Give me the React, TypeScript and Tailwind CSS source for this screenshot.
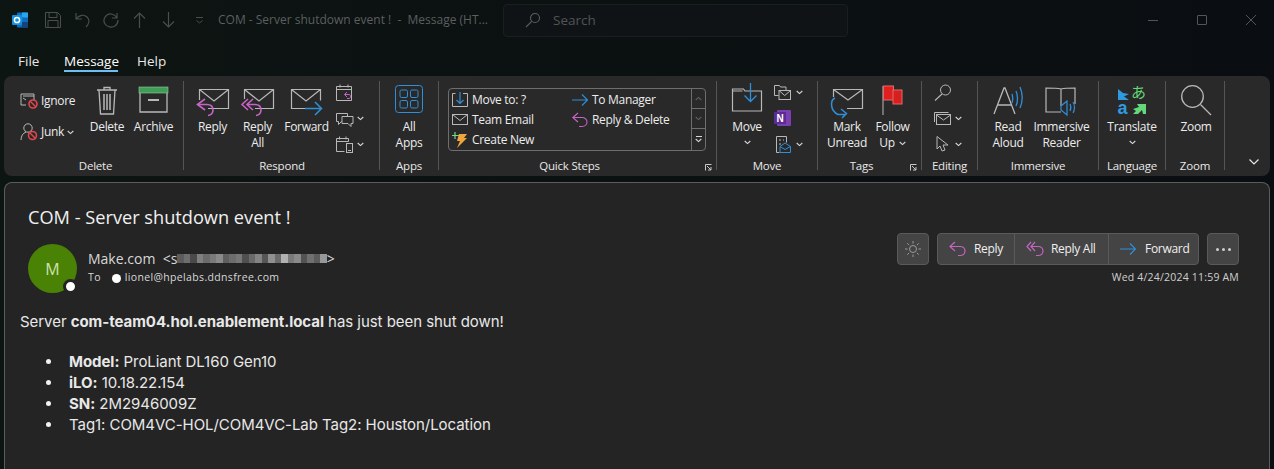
import React from "react";

const C = "#b8b8b8";
const P = "#c564c5";
const B = "#2f8fd8";

function Sv({ w, h, children, className = "" }: { w: number; h: number; children: React.ReactNode; className?: string }) {
  return (
    <svg width={w} height={h} viewBox={`0 0 ${w} ${h}`} fill="none" strokeWidth={1} className={"block shrink-0 overflow-visible " + className}>
      {children}
    </svg>
  );
}

function Caret({ className = "" }: { className?: string }) {
  return (
    <svg width="7" height="5" viewBox="0 0 7 5" fill="none" className={"shrink-0 " + className}>
      <path d="M.7 1l2.8 2.6L6.300 1" stroke="#d8d8d8" strokeWidth="1.100" />
    </svg>
  );
}

function Big({ w, icon, label, label2, caret, ml = 0 }: { w: number; icon: React.ReactNode; label: string; label2?: React.ReactNode; caret?: boolean; ml?: number }) {
  return (
    <div className="flex flex-col items-center shrink-0" style={{ width: w, marginLeft: ml }}>
      <div className="h-[35px] flex items-start justify-center">{icon}</div>
      <div className="mt-[3px] leading-[16px] whitespace-nowrap text-center">{label}</div>
      {label2 && <div className="leading-[16px] whitespace-nowrap text-center flex items-center gap-1">{label2}</div>}
      {caret && <Caret className="mt-[5px]" />}
    </div>
  );
}

function Group({ w, label, children, launcher, labelCls = "" }: { w: number; label: string; children: React.ReactNode; launcher?: boolean; labelCls?: string }) {
  return (
    <div className="relative flex flex-col shrink-0 border-r border-[#555555] my-[5px] h-[89px]" style={{ width: w }}>
      <div className="flex h-[72px]">{children}</div>
      <div className={"mt-auto -mb-[4px] text-center leading-[16px] text-[11.500px] tracking-[-.2px] text-[#e8e8e8] " + labelCls}>{label}</div>
      {launcher && (
        <svg width="7" height="7" viewBox="0 0 7 7" fill="none" className="absolute right-[4px] bottom-[-1px]">
          <path d="M.5 6.500V.5h6M2 2l4 4M6 3v3H3" stroke="#c8c8c8" />
        </svg>
      )}
    </div>
  );
}

function OutlookLogo() {
  return (
    <svg width="17" height="16" viewBox="0 0 17 16">
      <rect x="5" y="0.5" width="11" height="15" rx="1" fill="#0f6cbd" />
      <rect x="10" y="0.5" width="6" height="5" fill="#28a8ea" />
      <rect x="5" y="5" width="6" height="5" fill="#0f78d4" />
      <rect x="10" y="10" width="6" height="5.500" fill="#14447d" />
      <rect x="0" y="3" width="10" height="10" rx="1" fill="#1490df" />
      <circle cx="5" cy="8" r="2.600" fill="none" stroke="#fff" strokeWidth="1.500" />
    </svg>
  );
}

function TitleBar() {
  const s = "#4a4e4e";
  return (
    <div className="h-[40px] flex items-center relative">
      <div className="ml-[12px] w-[17px]"><OutlookLogo /></div>
      <svg width="16" height="16" viewBox="0 0 16 16" fill="none" stroke={s} className="ml-[16px]">
        <path d="M.5.5h12l3 3v12H.5zM4 .5v5h8v-5M3 15.500v-7h10v7" />
      </svg>
      <svg width="15" height="16" viewBox="0 0 15 16" fill="none" stroke={s} strokeWidth="1.200" className="ml-[14px]">
        <path d="M1 1v6h6M1 7c3-4 8-5 11-2 3 3 2 7-1 10" />
      </svg>
      <svg width="17" height="16" viewBox="0 0 17 16" fill="none" stroke={s} strokeWidth="1.200" className="ml-[13px]">
        <path d="M14 1v5H9M14 6c-2-4-7-5-10-3C1 5 0 9 2 12s7 4 10 2 3-4 3-6" />
      </svg>
      <svg width="13" height="16" viewBox="0 0 13 16" fill="none" stroke={s} strokeWidth="1.200" className="ml-[13px]">
        <path d="M6.500 16V1M1 6.500L6.500 1 12 6.500" />
      </svg>
      <svg width="13" height="16" viewBox="0 0 13 16" fill="none" stroke={s} strokeWidth="1.200" className="ml-[16px]">
        <path d="M6.500 0v15M1 9.500L6.500 15 12 9.500" />
      </svg>
      <svg width="7" height="7" viewBox="0 0 7 7" fill="none" stroke={s} className="ml-[21px]">
        <path d="M0 .5h7M.5 3.500L3.500 6l3-2.500" />
      </svg>
      <div className="ml-[15px] w-[265px] text-[12px] text-[#5b5f5f] whitespace-nowrap">COM - Server shutdown event !&nbsp; -&nbsp; Message (HT...</div>
      <div className="ml-[20px] w-[345px] h-[33px] rounded-[4px] bg-[#101315] border border-[#1b1e20] flex items-center pl-[21px]">
        <svg width="16" height="16" viewBox="0 0 16 16" fill="none" stroke="#5a5e60" strokeWidth="1.100">
          <circle cx="10" cy="6" r="4.500" />
          <path d="M6.700 9.300L1 15" />
        </svg>
        <span className="ml-[12px] text-[13.500px] text-[#505456]">Search</span>
      </div>
      <div className="ml-auto flex items-center pr-[18px] gap-[39px]">
        <div className="w-[10px] h-px bg-[#555]" />
        <div className="w-[10px] h-[10px] border border-[#555] rounded-[1px]" />
        <svg width="10" height="10" viewBox="0 0 10 10" stroke="#555"><path d="M0 0l10 10M10 0L0 10" /></svg>
      </div>
    </div>
  );
}

function Tabs() {
  return (
    <div className="h-[36px] pl-[18px] flex text-[13.500px] text-[#e8e8e8]">
      <div className="pt-[11px] w-[46px]">File</div>
      <div className="pt-[11px] w-[54px] h-[32px] border-b-[2px] border-[#70bdf2] text-white font-medium whitespace-nowrap">Message</div>
      <div className="ml-[19px] pt-[11px]">Help</div>
    </div>
  );
}

function Ribbon() {
  return (
    <div className="mx-[4px] h-[100px] rounded-[8px] bg-[#292929] flex text-[12px] tracking-[-.3px] text-[#ececec] items-start">
      <Group w={180} label="Delete" labelCls="pl-[4px]">
        <div className="w-[16px] shrink-0" />
        <div className="w-[64px] shrink-0 flex flex-col pt-[10px] gap-[11px]">
          <div className="flex items-center gap-[2px] h-[20px]">
            <svg width="19" height="16" viewBox="0 0 19 16" fill="none">
              <path d="M1 1h13v2M1 1v11h5M3 3h11v4M3 5l3 2" stroke={C} />
              <circle cx="13" cy="11" r="4" stroke="#e0474c" strokeWidth="1.600" />
              <path d="M10 8l6 6" stroke="#e0474c" strokeWidth="1.400" />
            </svg>
            <span>Ignore</span>
          </div>
          <div className="flex items-center gap-[2px] h-[20px]">
            <svg width="19" height="18" viewBox="0 0 19 18" fill="none">
              <circle cx="8" cy="5" r="4.200" stroke={C} />
              <path d="M1 17c0-4 2-7 5-8" stroke={C} />
              <circle cx="12.500" cy="12.500" r="4" stroke="#e0474c" strokeWidth="1.600" />
              <path d="M9.500 9.500l6 6" stroke="#e0474c" strokeWidth="1.400" />
            </svg>
            <span>Junk</span>
            <Caret className="ml-[1px]" />
          </div>
        </div>
        <Big w={38} ml={4} label="Delete" icon={
          <Sv w={22} h={30} className="mt-[4px]">
            <path d="M1 5h20M8 5V2.500h6V5M3 5l1.500 24h13L19 5" stroke={C} strokeWidth="1.300" />
            <path d="M8 9v16M11 9v16M14 9v16" stroke={C} strokeWidth="1.500" />
          </Sv>
        } />
        <Big w={43} ml={6} label="Archive" icon={
          <Sv w={29} h={26} className="mt-[6px]">
            <rect x="0" y="0" width="29" height="6" fill="#3e9e55" stroke="#9bc7a6" strokeWidth=".6" />
            <path d="M1 6v19h27V6" stroke={C} strokeWidth="1.300" />
            <path d="M9 13h11" stroke={C} strokeWidth="2" />
          </Sv>
        } />
      </Group>

      <Group w={196} label="Respond" labelCls="pl-[1px]">
        <Big w={39} ml={9} label="Reply" icon={
          <Sv w={33} h={30} className="mt-[8px]">
            <path d="M3.500 11V.5h29v19H12M3.500.5L18 12 32.500.5" stroke={C} strokeWidth="1.200" />
            <g stroke={P} strokeWidth="1.600">
              <path d="M9 10L1.500 15.500 9 21" />
              <path d="M1.500 15.500H11c4 0 6 2.500 6 5.500s-2 5-5 5.500" />
            </g>
          </Sv>
        } />
        <Big w={39} ml={6} label="Reply" label2="All" icon={
          <Sv w={33} h={30} className="mt-[8px]">
            <path d="M3.500 10V.5h29v19H14M3.500.5L18 12 32.500.5" stroke={C} strokeWidth="1.200" />
            <g stroke={P} strokeWidth="1.600">
              <path d="M7 10L1 15.500 7 21M12 10L6 15.500 12 21" />
              <path d="M6 15.500H14c4 0 6 2.500 6 5.500s-2 5-5 5.500" />
            </g>
          </Sv>
        } />
        <Big w={43} ml={8} label="Forward" icon={
          <Sv w={31} h={30} className="mt-[8px]">
            <path d="M14 19.500H.5V.5h29v11M.5.5L15 12 29.500.5" stroke={C} strokeWidth="1.200" />
            <path d="M14 19.500h16M24 13l6.500 6.500L24 26" stroke={B} strokeWidth="1.500" />
          </Sv>
        } />
        <div className="ml-[8px] flex flex-col pt-[3px] gap-[9px]">
          <Sv w={17} h={17}>
            <path d="M.5 2.500h15v14H.5zM.5 5.500h15M4 .5v3M12 .5v3" stroke={C} />
            <path d="M11 8L8.500 10.500 11 13M8.500 10.500H13c2 0 2 4 0 4h-2" stroke={P} />
          </Sv>
          <div className="flex items-center gap-[4px]">
            <Sv w={17} h={17}>
              <path d="M.5 3.500h11v8h-6l-3 3v-3h-2z" stroke={C} />
              <path d="M6 6.500h11v7h-2v3l-3-3H6z" fill="#292929" stroke={C} />
            </Sv>
            <Caret />
          </div>
          <div className="flex items-center gap-[4px]">
            <Sv w={17} h={17}>
              <path d="M.5 2.500h12v3M.5 2.500v13h8M.5 5.500h12M3.500 .5v3M10 .5v3" stroke={C} />
              <rect x="10.500" y="7.500" width="6" height="9" stroke={C} fill="#292929" />
              <path d="M12 14.500h3" stroke={C} />
            </Sv>
            <Caret />
          </div>
        </div>
      </Group>

      <Group w={59} label="Apps">
        <Big w={58} label="All" label2="Apps" icon={
          <Sv w={28} h={28} className="mt-[4px]">
            <rect x=".5" y=".5" width="27" height="27" rx="3" stroke={B} />
            <rect x="5" y="5" width="7.500" height="7.500" rx="1.500" stroke={B} />
            <rect x="15.500" y="5" width="7.500" height="7.500" rx="1.500" stroke={B} />
            <rect x="5" y="15.500" width="7.500" height="7.500" rx="1.500" stroke={B} />
            <rect x="15.500" y="15.500" width="7.500" height="7.500" rx="1.500" stroke={B} />
          </Sv>
        } />
      </Group>

      <Group w={278} label="Quick Steps" launcher labelCls="pr-[16px]">
        <div className="ml-[9px] mt-[7px] w-[258px] h-[63px] border border-[#6e6e6e] rounded-[4px] flex overflow-hidden">
          <div className="flex-1 flex pl-[3px] pt-[1px]">
            <div className="w-[120px] flex flex-col">
              <div className="h-[20px] flex items-center gap-[4px]">
                <Sv w={16} h={16}>
                  <path d="M.5 1.500h3M11 1.500h4.500v13H.5v-13" stroke={C} />
                  <path d="M8 0v11M4.500 8L8 11.500 11.500 8" stroke={B} strokeWidth="1.200" />
                </Sv>
                <span>Move to: ?</span>
              </div>
              <div className="h-[20px] flex items-center gap-[4px]">
                <Sv w={16} h={12}>
                  <rect x=".5" y=".5" width="15" height="10" stroke={C} />
                  <path d="M.5 .5L8 6.500 15.500 .5" stroke={C} />
                </Sv>
                <span>Team Email</span>
              </div>
              <div className="h-[20px] flex items-center gap-[4px]">
                <Sv w={16} h={16}>
                  <path d="M7 2h8l-3 4h3L5 16l3-7H5z" fill="#f0a53c" />
                  <path d="M3 0v7M0 3.500h7" stroke="#6edc8c" strokeWidth="1.200" />
                </Sv>
                <span>Create New</span>
              </div>
            </div>
            <div className="flex flex-col">
              <div className="h-[20px] flex items-center gap-[4px]">
                <Sv w={16} h={12}>
                  <path d="M0 6h15M10 .5L15.500 6 10 11.500" stroke={B} strokeWidth="1.100" />
                </Sv>
                <span>To Manager</span>
              </div>
              <div className="h-[20px] flex items-center gap-[4px]">
                <Sv w={16} h={16}>
                  <path d="M6 1L.8 5.500 6 10M.8 5.500H10c3 0 5 2 5 4.500S13 14.500 10 14.500H7" stroke={P} strokeWidth="1.100" />
                </Sv>
                <span>Reply &amp; Delete</span>
              </div>
            </div>
          </div>
          <div className="w-[14px] border-l border-[#6e6e6e] flex flex-col">
            <div className="h-[20px] border-b border-[#6e6e6e] flex items-center justify-center">
              <Caret className="rotate-180 opacity-30" />
            </div>
            <div className="h-[20px] border-b border-[#6e6e6e] flex items-center justify-center">
              <Caret className="opacity-30" />
            </div>
            <div className="flex-1 flex flex-col items-center justify-center gap-[1px]">
              <div className="w-[6px] h-px bg-[#d8d8d8]" />
              <Caret />
            </div>
          </div>
        </div>
      </Group>

      <Group w={101} label="Move">
        <Big w={46} ml={7} label="Move" caret icon={
          <Sv w={30} h={29} className="mt-[2px]">
            <path d="M.5 8V6h11l1.500 2H29.500v20H.5zM.5 8h10" stroke={C} strokeWidth="1.200" />
            <path d="M18.500 0v18M12.500 12.500l6 6 6-6" stroke={B} strokeWidth="1.300" />
          </Sv>
        } />
        <div className="ml-[4px] flex flex-col pt-[3px] gap-[9px]">
          <div className="flex items-center gap-[5px]">
            <Sv w={17} h={17}>
              <path d="M.5 1.500h5l1 1.500H12v3M.5 1.500v10h4" stroke={C} />
              <rect x="5" y="6.500" width="11.500" height="9" stroke={C} fill="#292929" />
              <path d="M5 6.500l5.700 5 5.800-5" stroke={C} />
            </Sv>
            <Caret />
          </div>
          <Sv w={17} h={17}>
            <rect x="3" y="0" width="14" height="16" rx="1" fill="#7a3fb0" />
            <rect x="0" y="2" width="12" height="12" rx="1" fill="#5b2a95" />
            <text x="6" y="12" textAnchor="middle" fontSize="10" fontWeight="700" fill="#fff" fontFamily="'Liberation Sans', sans-serif">N</text>
          </Sv>
          <div className="flex items-center gap-[5px] ml-[2px]">
            <Sv w={15} h={17}>
              <path d="M.5 16.500V.5h10v6M.5 16.500h3" stroke={C} />
              <path d="M3 4h2M7 4h1M3 8h2" stroke={C} />
              <path d="M4 10.500L9 7l5.500 3.500v6H4z" stroke={B} fill="#292929" />
              <path d="M4 10.500l5 3 5.500-3" stroke={B} />
            </Sv>
            <Caret />
          </div>
        </div>
      </Group>

      <Group w={104} label="Tags" launcher labelCls="pr-[16px]">
        <Big w={44} ml={7} label="Mark" label2="Unread" icon={
          <Sv w={32} h={30} className="mt-[8px]">
            <path d="M2.500 8V.5h29v19H16M2.500.5L17 11 31.500.5" stroke={C} strokeWidth="1.200" />
            <path d="M4 9C-1 11-1 22 7 25.500h8M10 20l5.500 4.500L11 29" stroke={B} strokeWidth="1.500" />
          </Sv>
        } />
        <Big w={43} ml={2} label="Follow" label2={<>Up<Caret /></>} icon={
          <Sv w={21} h={30} className="mt-[4px]">
            <path d="M1 1v29" stroke="#8a8a8a" strokeWidth="1.500" />
            <rect x="1.500" y="1" width="10" height="14" fill="#e02020" stroke="#e06a6a" />
            <rect x="11" y="5" width="9" height="14" fill="#d81f1f" stroke="#e06a6a" />
          </Sv>
        } />
      </Group>

      <Group w={56} label="Editing">
        <div className="ml-[12px] flex flex-col pt-[3px] gap-[11px]">
          <Sv w={18} h={17}>
            <circle cx="11.500" cy="6" r="5" stroke={C} />
            <path d="M8 10L1 16.500" stroke={C} strokeWidth="1.100" />
          </Sv>
          <div className="flex items-center gap-[4px]">
            <Sv w={17} h={13}>
              <path d="M.5 10V.5h14" stroke={C} />
              <rect x="2.500" y="2.500" width="14" height="10" stroke={C} fill="#292929" />
              <path d="M2.500 3l7 5 7-5" stroke={C} />
            </Sv>
            <Caret />
          </div>
          <div className="flex items-center gap-[5px] ml-[2px]">
            <Sv w={14} h={16}>
              <path d="M1 .5V13l3-3 2 5 3-1-2-5h5z" stroke={C} />
            </Sv>
            <Caret />
          </div>
        </div>
      </Group>

      <Group w={121} label="Immersive">
        <Big w={44} ml={8} label="Read" label2="Aloud" icon={
          <Sv w={30} h={30} className="mt-[4px]">
            <path d="M1 29L11 3h1l10 26M5 20h14" stroke={C} strokeWidth="1.300" />
            <path d="M19 9c1 3 1 6 0 9M23 6c2 4 2 11 0 15M27 2c3 7 3 14 0 21" stroke={B} strokeWidth="1.300" />
          </Sv>
        } />
        <Big w={61} ml={1} label="Immersive" label2="Reader" icon={
          <Sv w={33} h={31} className="mt-[5px]">
            <path d="M16 26H1V2c5 0 11 0 15 1 4-1 9-1 14-1v16M16 3v17" stroke={C} strokeWidth="1.200" />
            <path d="M16 20l6-5v14l-6-5zM25 18c1 2 1 5 0 7M28 16c2 3 2 8 0 11" fill="#292929" stroke={B} strokeWidth="1.200" />
          </Sv>
        } />
      </Group>

      <Group w={67} label="Language">
        <Big w={66} label="Translate" caret icon={
          <Sv w={28} h={30} className="mt-[4px]">
            <path d="M0 4L5 8 11 9 6 11.500 11 15H0z" fill="#2f9ae0" />
            <text x="13" y="13" fontSize="15" fill="#65d97a" fontFamily="'Noto Sans CJK JP', sans-serif">あ</text>
            <text x="-.5" y="29" fontSize="18" fontWeight="700" fill="#2f9ae0" fontFamily="'Liberation Sans', sans-serif">a</text>
            <path d="M15 24L21 22 19 19H28V29H25L24 25 20 29H15L18 26z" fill="#65d97a" />
          </Sv>
        } />
      </Group>

      <Group w={59} label="Zoom">
        <Big w={58} ml={1} label="Zoom" icon={
          <Sv w={30} h={30} className="mt-[4px]">
            <circle cx="11.500" cy="11.500" r="10.800" stroke={C} strokeWidth="1.300" />
            <path d="M19.500 19.500L30 30" stroke={C} strokeWidth="1.300" />
          </Sv>
        } />
      </Group>

      <div className="flex-1 flex justify-end items-end h-full pb-[11px] pr-[11px]">
        <svg width="10" height="6" viewBox="0 0 10 6" fill="none">
          <path d="M.5 .5L5 5 9.500 .5" stroke="#e8e8e8" strokeWidth="1.200" />
        </svg>
      </div>
    </div>
  );
}

function Blur() {
  const blocks = ["#5c5c5c","#6e6e6e","#4a4a4a","#7f7f7f","#6b6b6b","#7a7a7a","#8a8a8a","#5f5f5f","#6d6d6d","#777","#4f4f4f","#6a6a6a","#848484","#565656","#909090","#6b6b6b","#b0b0b0","#7a7a7a","#8a8a8a","#535353","#707070","#5c5c5c","#989898"];
  return (
    <span className="inline-flex h-[9px] items-stretch">
      {blocks.map((c, i) => (
        <span key={i} className="w-[6.500px] h-[9px] inline-block" style={{ backgroundColor: c }} />
      ))}
    </span>
  );
}

function ActionBtn({ children, cls = "" }: { children: React.ReactNode; cls?: string }) {
  return <div className={"flex items-center h-full " + cls}>{children}</div>;
}

function Bullet({ children }: { children: React.ReactNode }) {
  return (
    <li className="flex items-center">
      <span className="w-[5px] h-[5px] rounded-full bg-[#f2f2f2] mr-[18px]" />
      <span>{children}</span>
    </li>
  );
}

function Message() {
  return (
    <div className="mx-[4px] mt-[6px] h-[320px] rounded-t-[8px] border border-[#5c5c5c] border-b-0 bg-[#242424] text-white relative">
      <div className="flex justify-between">
        <div className="pl-[23px] pt-[22px]">
          <div className="text-[18.200px] leading-[24px] text-[#f0f0f0]">COM - Server shutdown event !</div>
          <div className="mt-[15px] flex">
            <div className="relative w-[49px] h-[49px] rounded-full bg-[#498205] flex items-center justify-center text-[16px] text-[#cfe3b0]">
              M
              <span className="absolute -right-[1px] -bottom-[1px] w-[15px] h-[15px] rounded-full bg-white border-[3px] border-[#242424]" />
            </div>
            <div className="ml-[11px] pt-[4px]">
              <div className="flex items-center h-[20px] text-[14px] text-[#d8d8d8] whitespace-nowrap">
                Make.com&nbsp;&nbsp;&lt;s<Blur />&gt;
              </div>
              <div className="flex items-center h-[16px] mt-[2px] text-[10.500px] text-[#d8d8d8] tracking-[.35px] whitespace-nowrap">
                To
                <span className="ml-[11px] w-[9px] h-[9px] rounded-full bg-white" />
                <span className="ml-[4px]">lionel@hpelabs.ddnsfree.com</span>
              </div>
            </div>
          </div>
        </div>
        <div className="pr-[28px] pt-[51px] flex flex-col items-end -mt-[1px] mr-[2px]">
          <div className="flex h-[32px] text-[12px] tracking-[-.3px] text-[#f0f0f0]">
            <div className="w-[32px] h-[32px] rounded-[4px] bg-[#444444] border border-[#5a5a5a] flex items-center justify-center">
              <svg width="16" height="16" viewBox="0 0 16 16" fill="none" stroke="#9a9a9a">
                <circle cx="8" cy="8" r="3.500" />
                <path d="M8 0v2.500M8 13.500V16M0 8h2.500M13.500 8H16M2.300 2.300l1.800 1.800M11.900 11.900l1.800 1.800M13.700 2.300l-1.800 1.800M4.100 11.900l-1.800 1.800" />
              </svg>
            </div>
            <div className="ml-[8px] w-[262px] h-[32px] rounded-[4px] bg-[#444444] border border-[#5a5a5a] flex">
              <ActionBtn cls="w-[77px] border-r border-[#5a5a5a] pl-[11px] gap-[8px]">
                <svg width="17" height="16" viewBox="0 0 17 16" fill="none" stroke={P} strokeWidth="1.200">
                  <path d="M6 1L1 5.500 6 10M1 5.500h10c3 0 5 2 5 4.500s-2 4.500-5 4.500H9" />
                </svg>
                Reply
              </ActionBtn>
              <ActionBtn cls="w-[94px] border-r border-[#5a5a5a] pl-[11px] gap-[7px]">
                <svg width="18" height="16" viewBox="0 0 18 16" fill="none" stroke={P} strokeWidth="1.200">
                  <path d="M5 1L1 5.500 5 10M9 1L5 5.500 9 10M5 5.500h7c3 0 5 2 5 4.500s-2 4.500-5 4.500h-2" />
                </svg>
                Reply All
              </ActionBtn>
              <ActionBtn cls="flex-1 pl-[11px] gap-[9px]">
                <svg width="16" height="12" viewBox="0 0 16 12" fill="none" stroke={B} strokeWidth="1.200">
                  <path d="M0 6h15M10 .5L15.500 6 10 11.500" />
                </svg>
                Forward
              </ActionBtn>
            </div>
            <div className="ml-[8px] w-[32px] h-[32px] rounded-[4px] bg-[#444444] border border-[#5a5a5a] flex items-center justify-center gap-[3px]">
              <span className="w-[3px] h-[3px] rounded-full bg-[#d0d0d0]" />
              <span className="w-[3px] h-[3px] rounded-full bg-[#d0d0d0]" />
              <span className="w-[3px] h-[3px] rounded-full bg-[#d0d0d0]" />
            </div>
          </div>
          <div className="mt-[4px] text-[10.500px] leading-[16px] text-[#d0d0d0] tracking-[.2px]">Wed 4/24/2024 11:59 AM</div>
        </div>
      </div>
      <div className="pl-[15px] mt-[18px] text-[15px] leading-[21px] tracking-[-.05px] text-[#e8e8e8] font-['Inter',sans-serif]">
        <p>Server <b className="font-bold">com-team04.hol.enablement.local</b> has just been shut down!</p>
        <ul className="pl-[26px] mt-[19px]">
          <Bullet><b className="font-bold">Model:</b> ProLiant DL160 Gen10</Bullet>
          <Bullet><b className="font-bold">iLO:</b> 10.18.22.154</Bullet>
          <Bullet><b className="font-bold">SN:</b> 2M2946009Z</Bullet>
          <Bullet>Tag1: COM4VC-HOL/COM4VC-Lab Tag2: Houston/Location</Bullet>
        </ul>
      </div>
    </div>
  );
}

export default function App() {
  return (
    <div className="w-[1274px] h-[469px] overflow-hidden bg-[linear-gradient(90deg,#0d1512_0%,#0b1011_50%,#0a0e12_100%)] font-['Open_Sans','Noto_Sans',sans-serif]">
      <TitleBar />
      <Tabs />
      <Ribbon />
      <Message />
    </div>
  );
}
